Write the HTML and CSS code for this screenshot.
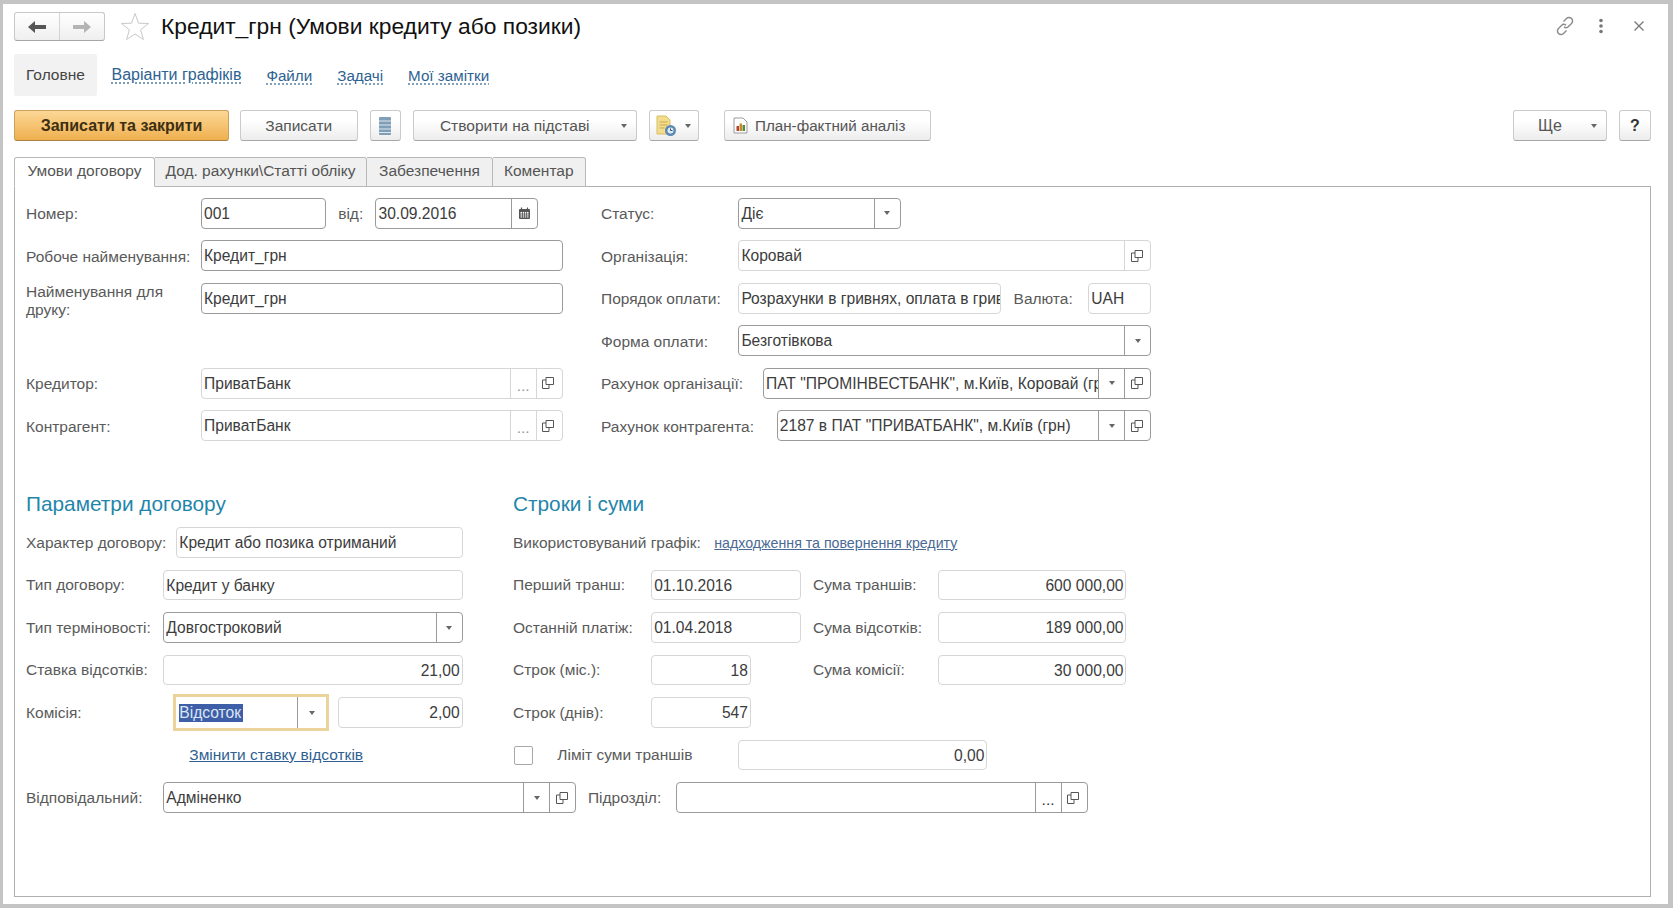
FILE: index.html
```html
<!DOCTYPE html>
<html lang="uk">
<head>
<meta charset="utf-8">
<title>Кредит_грн</title>
<link rel="stylesheet" href="styles.css">
</head>
<body>
<svg class="sprite" width="0" height="0">
  <symbol id="i-open" viewBox="0 0 14 14"><path d="M5 1.500h7.500v7H5zM5 4H1.500v8.500H8V8.500" fill="none" stroke="#555" stroke-width="1"/></symbol>
</svg>
<div class="win">
  <header class="head">
    <div class="nav">
      <span class="nav-b"><svg width="20" height="14" viewBox="0 0 20 14"><path d="M1 7l7-6v4h11v4H8v4z" fill="#555"/></svg></span>
      <span class="nav-b"><svg width="20" height="14" viewBox="0 0 20 14"><path d="M19 7l-7-6v4H1v4h11v4z" fill="#b4b4b4"/></svg></span>
    </div>
    <svg class="star" width="30" height="29" viewBox="0 0 30 29"><path d="M15 1.500l3.500 9.700 10 .3-7.900 6.300 2.800 9.700L15 22l-8.400 5.500 2.800-9.700L1.500 11.500l10-.3z" fill="none" stroke="#c8c8c8"/></svg>
    <h1 class="title">Кредит_грн (Умови кредиту або позики)</h1>
    <div class="head-tools">
      <svg class="t-link" width="22" height="22" viewBox="0 0 22 22"><g fill="none" stroke="#8a8a8a" stroke-width="1.400"><path d="M9.500 6.500l3-3a3.500 3.500 0 0 1 5 0 3.500 3.500 0 0 1 0 5l-3 3a3.500 3.500 0 0 1-4.500.4"/><path d="M12.500 15.500l-3 3a3.500 3.500 0 0 1-5 0 3.500 3.500 0 0 1 0-5l3-3a3.500 3.500 0 0 1 4.500-.4"/></g></svg>
      <svg class="t-dots" width="8" height="18" viewBox="0 0 8 18"><g fill="#777"><circle cx="4" cy="3.500" r="1.800"/><circle cx="4" cy="9" r="1.800"/><circle cx="4" cy="14.500" r="1.800"/></g></svg>
      <svg width="12" height="12" viewBox="0 0 12 12"><path d="M1.500 1.500l9 9M10.500 1.500l-9 9" stroke="#777" stroke-width="1.300"/></svg>
    </div>
  </header>

  <nav class="sections">
    <span class="sec-cur">Головне</span>
    <a class="sec-link sec-first">Варіанти графіків</a>
    <a class="sec-link">Файли</a>
    <a class="sec-link">Задачі</a>
    <a class="sec-link">Мої замітки</a>
  </nav>

  <div class="cmd">
    <button class="btn btn-main w-main">Записати та закрити</button>
    <button class="btn w-save">Записати</button>
    <button class="btn w-list"><svg width="14" height="20" viewBox="0 0 14 20"><rect x="1" y="1" width="12" height="18" rx="1" fill="#7f9fb8"/><path d="M1 5h12M1 9h12M1 13h12M1 16.500h12" stroke="#dfe7ee" stroke-width="1.200"/></svg></button>
    <button class="btn w-base"><span class="btn-t">Створити на підставі</span><i class="arr btn-arr"></i></button>
    <button class="btn w-file"><svg width="21" height="22" viewBox="0 0 21 22"><path d="M1 1h9l4 4v14H1z" fill="#f3dc8c" stroke="#d9bd66"/><path d="M3.500 7h8M3.500 10h8M3.500 13h5" stroke="#c7a94f"/><circle cx="14.500" cy="15.500" r="5.500" fill="#5a89b5"/><circle cx="14.500" cy="15.500" r="3" fill="#dfe9f2"/><path d="M14.500 13.500v2h2" stroke="#35587a" fill="none"/></svg><i class="arr"></i></button>
    <button class="btn w-plan"><svg width="15" height="17" viewBox="0 0 15 17"><path d="M1 1h9l4 4v11H1z" fill="#fff" stroke="#9a9a9a"/><rect x="3.500" y="9" width="2.500" height="5" fill="#b5402f"/><rect x="6.500" y="6.500" width="2.500" height="7.500" fill="#c98a2b"/><rect x="9.500" y="8" width="2.500" height="6" fill="#5b8a3c"/></svg><span>План-фактний аналіз</span></button>
    <span class="cmd-sp"></span>
    <button class="btn w-more"><span class="btn-t">Ще</span><i class="arr btn-arr"></i></button>
    <button class="btn w-help">?</button>
  </div>

  <div class="tabs">
    <span class="tab tab-on t1">Умови договору</span>
    <span class="tab t2">Дод. рахунки\Статті обліку</span>
    <span class="tab t3">Забезпечення</span>
    <span class="tab t4">Коментар</span>
  </div>

  <main class="panel">
    <section class="top">
      <div class="col col-a">
        <div class="row">
          <label class="lb l-a">Номер:</label>
          <div class="f dark w-num"><span class="v">001</span></div>
          <label class="lb l-vid">від:</label>
          <div class="f dark grow"><span class="v">30.09.2016</span><span class="sb"><svg width="13" height="13" viewBox="0 0 13 13"><rect x="1" y="2" width="11" height="10" rx="1" fill="#555"/><rect x="2.500" y="5" width="8" height="5.500" fill="#fff"/><path d="M4.500 5v6M6.500 5v6M8.500 5v6M2 7h9M2 9h9" stroke="#555" stroke-width=".8"/><path d="M3.500.5v2.500M9.500.5v2.500" stroke="#555" stroke-width="1.200"/></svg></span></div>
          <span class="date-rest"></span>
        </div>
        <div class="row">
          <label class="lb l-a">Робоче найменування:</label>
          <div class="f dark grow"><span class="v">Кредит_грн</span></div>
        </div>
        <div class="row">
          <label class="lb l-a l-two">Найменування для друку:</label>
          <div class="f dark grow"><span class="v">Кредит_грн</span></div>
        </div>
        <div class="row"></div>
        <div class="row">
          <label class="lb l-a">Кредитор:</label>
          <div class="f grow"><span class="v">ПриватБанк</span><span class="sb dots">...</span><span class="sb"><svg class="io"><use href="#i-open"/></svg></span></div>
        </div>
        <div class="row">
          <label class="lb l-a">Контрагент:</label>
          <div class="f grow"><span class="v">ПриватБанк</span><span class="sb dots">...</span><span class="sb"><svg class="io"><use href="#i-open"/></svg></span></div>
        </div>
      </div>
      <div class="col col-b">
        <div class="row">
          <label class="lb l-b">Статус:</label>
          <div class="f dark w-status"><span class="v">Діє</span><span class="sb"><i class="arr"></i></span></div>
        </div>
        <div class="row">
          <label class="lb l-b">Організація:</label>
          <div class="f grow"><span class="v">Коровай</span><span class="sb"><svg class="io"><use href="#i-open"/></svg></span></div>
        </div>
        <div class="row">
          <label class="lb l-b">Порядок оплати:</label>
          <div class="f w-order"><span class="v">Розрахунки в гривнях, оплата в грив</span></div>
          <label class="lb l-cur">Валюта:</label>
          <div class="f grow"><span class="v">UAH</span></div>
        </div>
        <div class="row">
          <label class="lb l-b">Форма оплати:</label>
          <div class="f dark grow"><span class="v">Безготівкова</span><span class="sb"><i class="arr"></i></span></div>
        </div>
        <div class="row">
          <label class="lb l-acc1">Рахунок організації:</label>
          <div class="f dark grow"><span class="v">ПАТ "ПРОМІНВЕСТБАНК", м.Київ, Коровай (гр</span><span class="sb"><i class="arr"></i></span><span class="sb"><svg class="io"><use href="#i-open"/></svg></span></div>
        </div>
        <div class="row">
          <label class="lb l-acc2">Рахунок контрагента:</label>
          <div class="f dark grow"><span class="v">2187 в ПАТ "ПРИВАТБАНК", м.Київ (грн)</span><span class="sb"><i class="arr"></i></span><span class="sb"><svg class="io"><use href="#i-open"/></svg></span></div>
        </div>
      </div>
    </section>

    <section class="bottom">
      <div class="col col-c">
        <h2 class="sect">Параметри договору</h2>
        <div class="row">
          <label class="lb l-char">Характер договору:</label>
          <div class="f grow"><span class="v">Кредит або позика отриманий</span></div>
        </div>
        <div class="row">
          <label class="lb l-c">Тип договору:</label>
          <div class="f grow"><span class="v">Кредит у банку</span></div>
        </div>
        <div class="row">
          <label class="lb l-c">Тип терміновості:</label>
          <div class="f dark grow"><span class="v">Довгостроковий</span><span class="sb"><i class="arr"></i></span></div>
        </div>
        <div class="row">
          <label class="lb l-c">Ставка відсотків:</label>
          <div class="f grow num"><span class="v">21,00</span></div>
        </div>
        <div class="row">
          <label class="lb l-kom">Комісія:</label>
          <div class="f focus"><span class="v"><span class="sel">Відсоток</span></span><span class="sb"><i class="arr"></i></span></div>
          <div class="f grow num kom-val"><span class="v">2,00</span></div>
        </div>
        <div class="row">
          <a class="act">Змінити ставку відсотків</a>
        </div>
      </div>
      <div class="col col-d">
        <h2 class="sect">Строки і суми</h2>
        <div class="row">
          <label class="lb l-sch">Використовуваний графік:</label>
          <a class="sch">надходження та повернення кредиту</a>
        </div>
        <div class="row">
          <label class="lb l-d">Перший транш:</label>
          <div class="f w-date"><span class="v">01.10.2016</span></div>
          <label class="lb l-e">Сума траншів:</label>
          <div class="f grow num"><span class="v">600 000,00</span></div>
        </div>
        <div class="row">
          <label class="lb l-d">Останній платіж:</label>
          <div class="f w-date"><span class="v">01.04.2018</span></div>
          <label class="lb l-e">Сума відсотків:</label>
          <div class="f grow num"><span class="v">189 000,00</span></div>
        </div>
        <div class="row">
          <label class="lb l-d">Строк (міс.):</label>
          <div class="f w-short num"><span class="v">18</span></div>
          <label class="lb l-e l-e2">Сума комісії:</label>
          <div class="f grow num"><span class="v">30 000,00</span></div>
        </div>
        <div class="row">
          <label class="lb l-d">Строк (днів):</label>
          <div class="f w-short num"><span class="v">547</span></div>
        </div>
        <div class="row">
          <span class="chk"></span>
          <label class="lb l-lim">Ліміт суми траншів</label>
          <div class="f w-lim num"><span class="v">0,00</span></div>
        </div>
      </div>
    </section>

    <section class="row full">
      <label class="lb l-c">Відповідальний:</label>
      <div class="f dark w-resp"><span class="v">Адміненко</span><span class="sb"><i class="arr"></i></span><span class="sb"><svg class="io"><use href="#i-open"/></svg></span></div>
      <label class="lb l-dep">Підрозділ:</label>
      <div class="f dark w-dep"><span class="v"></span><span class="sb dots dk">...</span><span class="sb"><svg class="io"><use href="#i-open"/></svg></span></div>
    </section>
  </main>
</div>
</body>
</html>
```

FILE: styles.css
```css
* { box-sizing: border-box; }
html, body { margin: 0; height: 100%; }
body {
  background: #c4c4c4;
  padding: 4px 5px 4px 3px;
  height: 908px;
  overflow: hidden;
  font-family: "Liberation Sans", Arial, sans-serif;
  font-size: 15.500px;
  color: #555;
}
.sprite { position: absolute; }
.win {
  background: #fff;
  height: 100%;
  padding: 8px 17px 7px 11px;
  display: flex;
  flex-direction: column;
}

/* header */
.head { display: flex; align-items: center; height: 29px; flex: none; }
.nav {
  display: flex;
  width: 91px;
  height: 29px;
  border: 1px solid #c8c8c8;
  border-bottom-color: #a6a6a6;
  border-radius: 3px;
  background: linear-gradient(#fff, #efefef);
}
.nav-b { flex: 1; display: flex; align-items: center; justify-content: center; }
.nav-b + .nav-b { border-left: 1px solid #d4d4d4; }
.star { margin-left: 15px; flex: none; }
.title { margin: 0 0 0 11px; font-size: 22.800px; font-weight: 400; color: #111; white-space: nowrap; }
.head-tools { margin-left: auto; display: flex; align-items: center; padding-right: 6px; position: relative; top: -1px; }
.t-link { margin-right: 21px; }
.t-dots { margin-right: 28px; }

/* sections */
.sections { display: flex; align-items: center; height: 42px; margin-top: 13px; flex: none; }
.sec-cur {
  display: flex; align-items: center;
  height: 42px; padding: 0 12px;
  width: 82.500px;
  background: #f2f2f2;
  border-radius: 2px;
  color: #444;
}
.sec-link {
  font-size: 15.200px;
  color: #2d6291;
  text-decoration: underline dotted #5b84a8;
  text-underline-offset: 3px;
  margin-right: 25px;
}
.sec-first { font-size: 16px; margin-left: 15px; }

/* commands */
.cmd { display: flex; align-items: center; gap: 12px; height: 31px; margin-top: 14px; flex: none; }
.btn {
  position: relative;
  height: 31px;
  padding: 0;
  display: flex; align-items: center; justify-content: center;
  gap: 8px;
  border: 1px solid #cbcbcb;
  border-bottom-color: #a8a8a8;
  border-radius: 3px;
  background: linear-gradient(#fff 35%, #ececec);
  font: 15.500px "Liberation Sans", Arial, sans-serif;
  color: #555;
}
.btn-main {
  background: linear-gradient(#fcd796, #efb04f);
  border-color: #c9a15a;
  border-bottom-color: #a8823e;
  font-weight: 700;
  font-size: 16px;
  color: #3d2f12;
}
.w-main { width: 215px; }
.w-save { width: 117.500px; margin-left: -1px; }
.w-list { width: 31.500px; }
.w-base { width: 223.500px; padding-right: 20px; }
.w-file { width: 50.500px; }
.w-plan { width: 207px; margin-left: 13px; justify-content: flex-start; padding-left: 8px; gap: 7px; font-size: 15.200px; }
.w-more { width: 94px; padding-right: 20px; font-size: 16px; }
.w-help { width: 32px; font-weight: 700; font-size: 16px; color: #333; }
.cmd-sp { flex: 1; }
.btn-arr { position: absolute; right: 9px; top: 13px; }
.arr {
  display: inline-block;
  width: 0; height: 0;
  border-left: 3.500px solid transparent;
  border-right: 3.500px solid transparent;
  border-top: 4px solid #666;
}

/* tabs */
.tabs { display: flex; align-items: stretch; height: 30px; margin-top: 16px; flex: none; position: relative; z-index: 1; }
.tab {
  display: flex; align-items: center; justify-content: center;
  height: 30px;
  padding-bottom: 1.500px;
  background: #f0f0f0;
  border: 1px solid #b8b8b8;
  border-left: 0;
  border-radius: 0 3px 0 0;
  color: #555;
  white-space: nowrap;
}
.tab-on { background: #fff; border-left: 1px solid #b8b8b8; border-bottom-color: #fff; border-radius: 3px 3px 0 0; }
.t1 { width: 141px; }
.t2 { width: 212px; }
.t3 { width: 126px; }
.t4 { width: 92.500px; }

/* panel */
.panel {
  flex: 1;
  margin-top: -1px;
  border: 1px solid #b0b0b0;
  padding: 11px 0 0 11px;
  display: flex;
  flex-direction: column;
  gap: 11.900px;
}
.top { display: flex; }
.col { display: flex; flex-direction: column; gap: 11.900px; flex: none; }
.col-a { width: 536.600px; }
.col-b { width: 550.500px; margin-left: 38.400px; }
.bottom { display: flex; margin-top: 39.500px; }
.col-c { width: 436.700px; }
.col-d { width: 613.500px; margin-left: 50.300px; }
.sect { margin: 0 0 -1px; height: 24px; line-height: 24px; font-size: 20.800px; font-weight: 400; color: #1f86aa; }

.row { display: flex; align-items: center; height: 30.600px; flex: none; }
.lb { flex: none; color: #5a5a5a; white-space: nowrap; padding-top: 2px; }
.bottom .lb, .full .lb { padding-top: 0; }
.l-a { width: 175px; }
.l-two { white-space: normal; width: 161px; margin-right: 14px; line-height: 18px; align-self: flex-start; padding-top: 0; }
.l-vid { width: 37.300px; margin-left: 12.500px; }
.l-b { width: 137.400px; }
.l-cur { width: 74.700px; margin-left: 13px; }
.l-acc1 { width: 162px; }
.l-acc2 { width: 175.800px; }
.l-char { width: 150.300px; }
.l-c { width: 137.300px; }
.l-kom { width: 147.300px; }
.l-sch { width: 201.300px; }
.l-d { width: 138.200px; }
.l-e { width: 125.200px; margin-left: 12.400px; }
.l-e2 { margin-left: 62px; }
.l-lim { width: 181px; }
.l-dep { width: 88.400px; margin-left: 11.600px; }

/* fields */
.f {
  display: flex;
  align-items: stretch;
  height: 100%;
  min-width: 0;
  background: #fff;
  border: 1px solid #d6d6d6;
  border-radius: 4px;
  color: #3c3c3c;
}
.f.dark { border-color: #9a9a9a; }
.grow { flex: 1; }
.v { flex: 1; min-width: 0; padding: 0 2px; line-height: 29px; overflow: hidden; white-space: nowrap; font-size: 15.600px; }
.num .v { text-align: right; }
.sb {
  flex: none;
  width: 26px;
  display: flex; align-items: center; justify-content: center;
  border-left: 1px solid #d6d6d6;
}
.dark .sb { border-left-color: #9a9a9a; }
.dots { align-items: flex-end; line-height: 24px; color: #999; }
.dots.dk { color: #333; }
.io { width: 14px; height: 14px; position: relative; left: -1px; }

.w-num { width: 124.700px; }
.date-rest { width: 24.300px; }
.w-status { width: 162.400px; }
.w-order { width: 262.200px; }
.w-date { width: 149.400px; }
.w-short { width: 99.800px; }
.w-lim { width: 249.200px; }
.w-resp { width: 413px; }
.w-dep { width: 411.300px; }

.focus {
  width: 155.400px;
  height: 36.400px;
  border: 3px solid #ecd29b;
  border-radius: 0;
  margin: -3px 9.600px -3px 0;
  position: relative;
}
.focus .sb { border-left-color: #9a9a9a; width: 29px; }
.focus .v { padding: 0 0 0 3px; line-height: 30px; }
.sel { display: inline-block; width: 64px; height: 18px; line-height: 18px; overflow: hidden; background: #3f5ea8; color: #dbe6f5; vertical-align: middle; }
.act { margin-left: 163.300px; color: #2f5f92; text-decoration: underline; }
.sch { font-size: 14.200px; color: #4a6a94; text-decoration: underline; }
.chk {
  flex: none;
  width: 19px; height: 19px;
  margin: 0 24.300px 0 1px;
  border: 1px solid #a8a8a8;
  border-radius: 2px;
}
```
